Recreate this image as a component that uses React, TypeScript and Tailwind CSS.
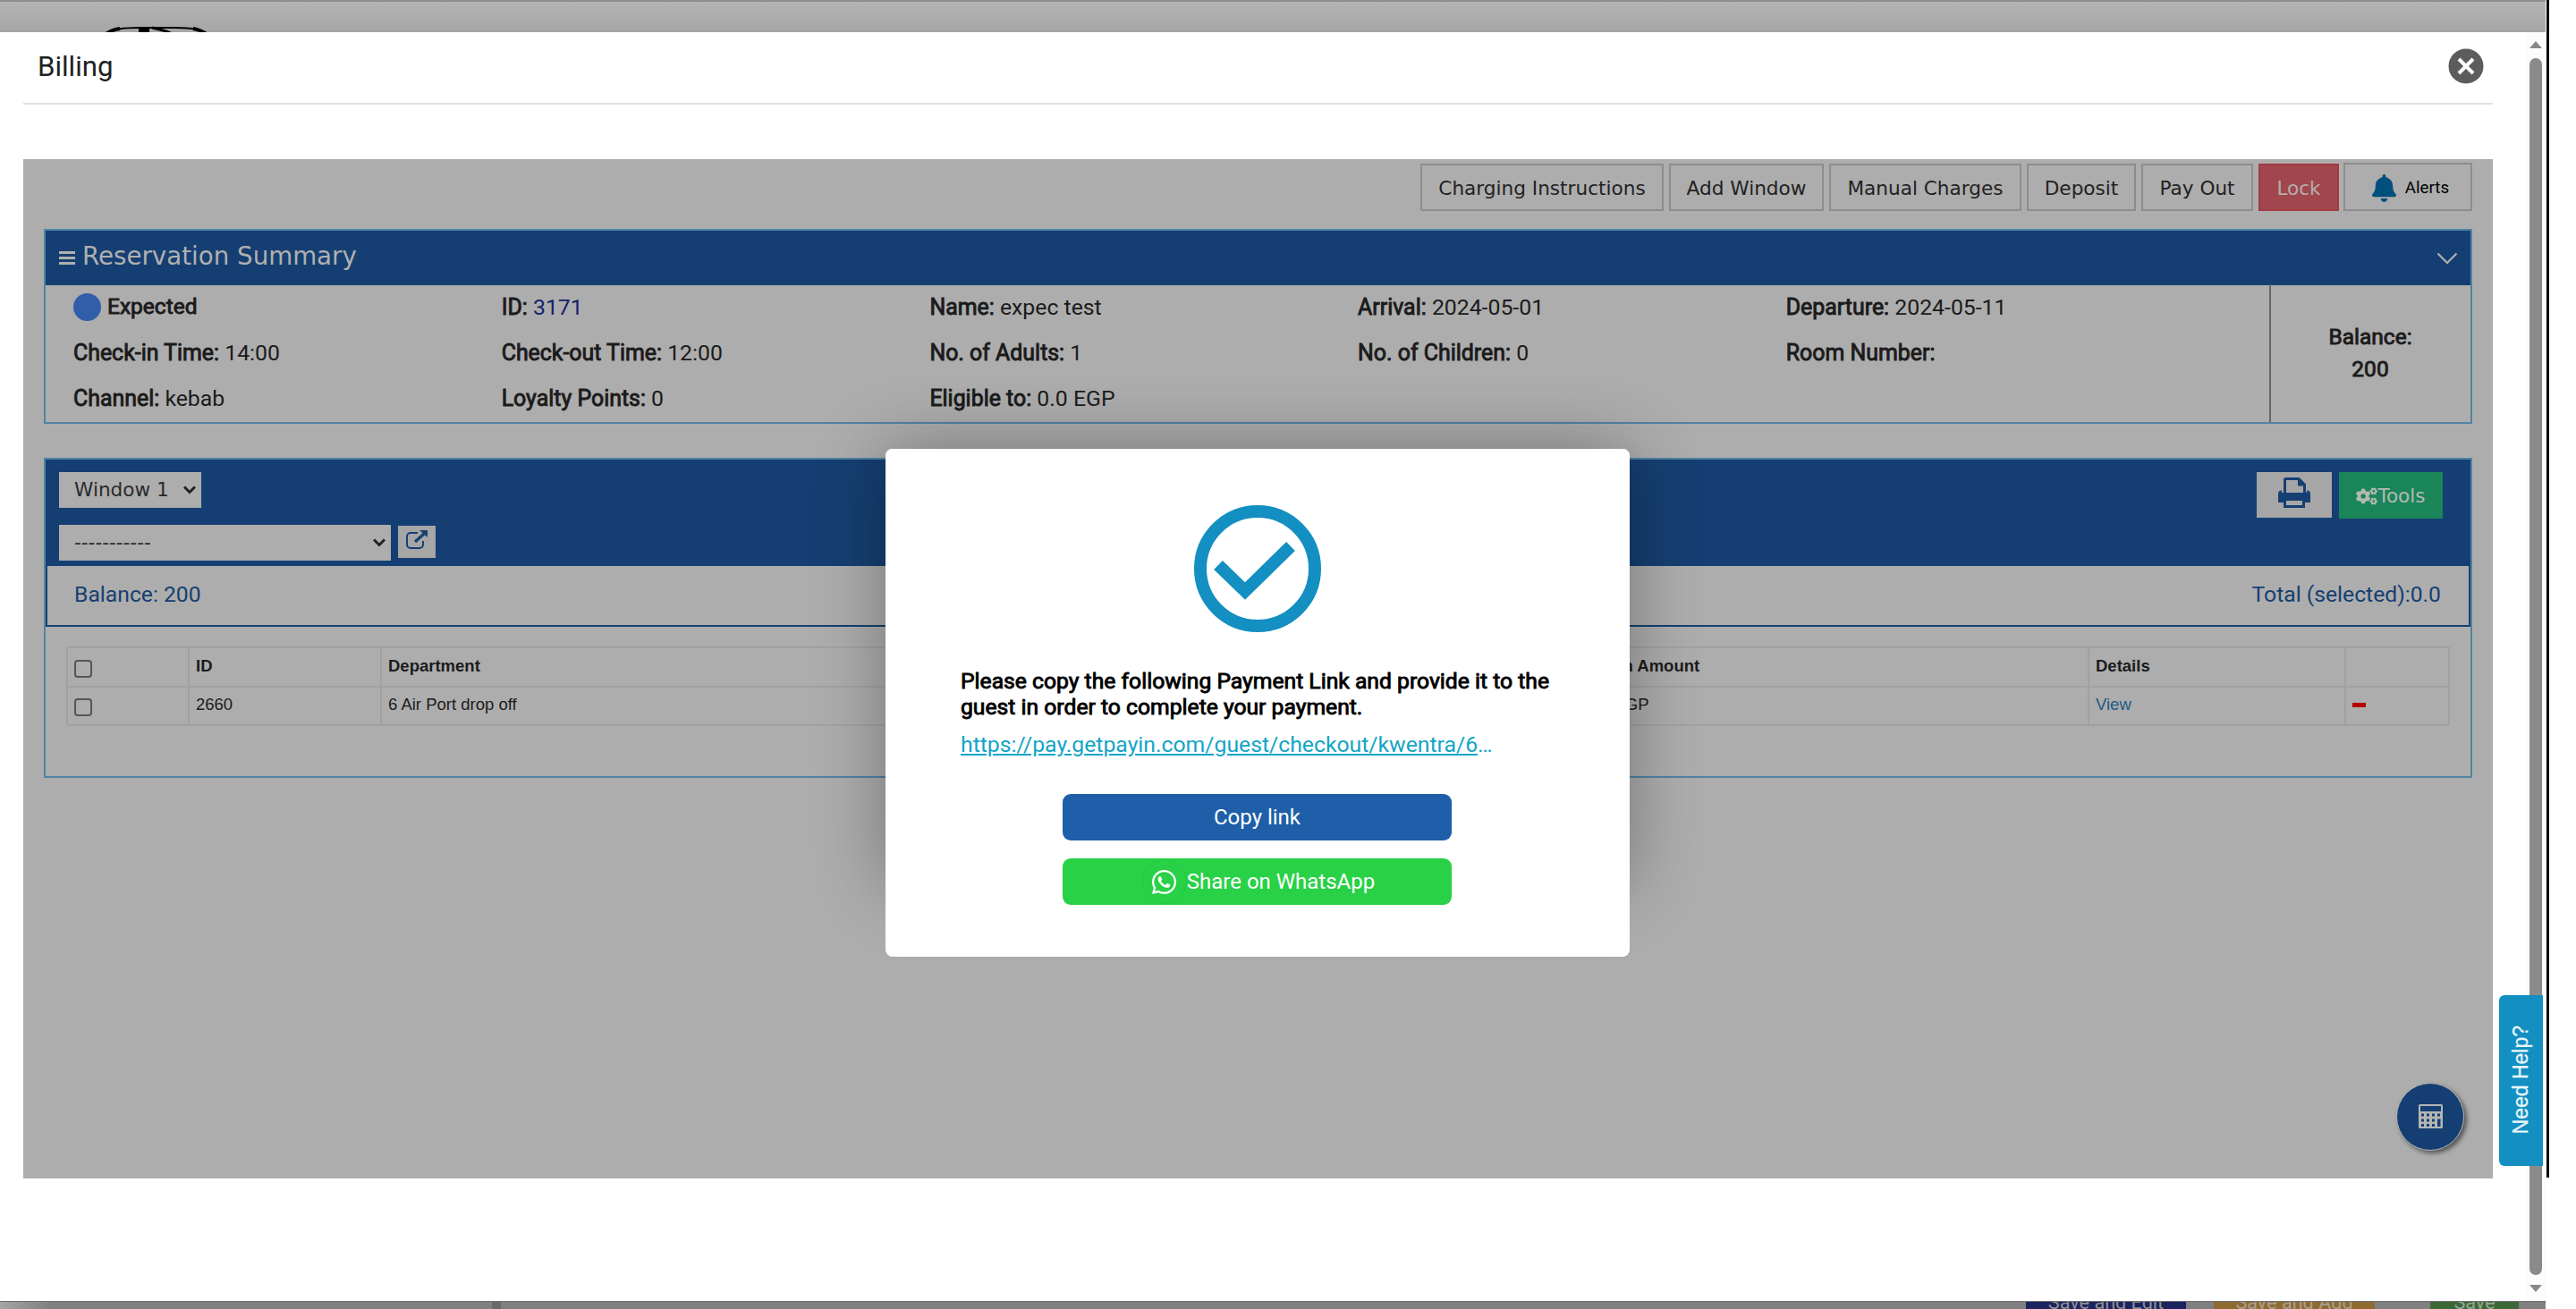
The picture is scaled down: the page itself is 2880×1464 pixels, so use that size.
import type { ReactNode } from 'react';
import { FaBell, FaCogs, FaWhatsapp } from 'react-icons/fa';

interface FieldProps {
  label: string;
  value?: string;
  link?: boolean;
}

const Strong = ({ children }: { children: ReactNode }) => (
  <span className="[-webkit-text-stroke:0.9px_currentColor]">{children}</span>
);

const Field = ({ label, value, link }: FieldProps) => (
  <div className="flex h-[51px] w-[478.7px] items-center whitespace-pre text-[24.8px]">
    <span className="text-[24.9px]"><Strong>{label}</Strong></span>
    {value && <span className={link ? 'text-[#151f6b]' : ''}> {value}</span>}
  </div>
);

const ToolbarButton = ({ label, width }: { label: string; width: string }) => (
  <button className={`h-[53px] border-2 border-[#8d8d8d] pt-[3px] text-[#222] ${width}`}>{label}</button>
);

const Chevron = () => (
  <svg width="14" height="10" viewBox="0 0 14 10" fill="none" stroke="#222" strokeWidth="3">
    <path d="M1 1.5 7 7.5 13 1.5" />
  </svg>
);

const Checkbox = () => <div className="mt-[6px] size-[20px] rounded-[4px] border-2 border-[#555]" />;

const PageTop = () => (
  <div className="h-[36px] overflow-hidden border-t-2 border-[#8f8f8f] bg-linear-to-b from-[#b3b3b3] to-[#a6a6a6]">
    <svg className="ml-[112px] mt-[27px]" width="128" height="20" viewBox="0 0 128 20" fill="none" stroke="#000">
      <path d="M4 11C14 3 26 2 44 2H84C104 2 112 4 122 11" strokeWidth="2" />
      <path d="M4 11C10 6 14 4 22 3M104 3C112 4 116 7 122 11" strokeWidth="4" />
      <path d="M49 2V20" strokeWidth="12" />
      <path d="M58 2Q74 5 82 10" strokeWidth="3" />
    </svg>
  </div>
);

const PageBottom = () => (
  <div className="flex h-[9px] items-start overflow-hidden border-t border-[#6e6e6e] bg-linear-to-r from-[#a5a5a5] via-[#808080] via-2% to-[#808080] text-center text-[21.6px] leading-[22px]">
    <div className="ml-[550px] h-[9px] w-[10px] bg-[#6a6a6a]" />
    <div className="-mt-[10px] ml-[1705px] h-[22px] w-[179px] bg-[#1c2460] text-[#909090]">Save and Edit</div>
    <div className="-mt-[10px] ml-[31px] h-[22px] w-[180px] bg-[#8f6a30] text-[#a8a090]">Save and Add</div>
    <div className="-mt-[10px] ml-[62px] h-[22px] w-[99px] bg-[#3c6837] text-[#98a598]">Save</div>
  </div>
);

const ModalHeader = () => (
  <header className="ml-[26px] flex h-[81px] w-[2761px] items-start justify-between border-b-2 border-[#e0e0e0] pl-[16px] pr-[10px] pt-[18px]">
    <h1 className="text-[31.2px] leading-[42px] text-[#222]">Billing</h1>
    <svg width="40" height="40" viewBox="0 0 40 40">
      <circle cx="20" cy="20" r="19.5" fill="#5c5c5c" />
      <path d="M12 12 28 28M28 12 12 28" stroke="#fff" strokeWidth="4" />
    </svg>
  </header>
);

const Toolbar = () => (
  <div className="flex h-[58px] items-end justify-end gap-[6px] pr-[23px] font-['DejaVu_Sans',sans-serif] text-[21.6px]">
    <ToolbarButton label="Charging Instructions" width="w-[272px]" />
    <ToolbarButton label="Add Window" width="w-[173px]" />
    <ToolbarButton label="Manual Charges" width="w-[215px]" />
    <ToolbarButton label="Deposit" width="w-[122px]" />
    <ToolbarButton label="Pay Out" width="w-[125px]" />
    <button className="h-[53px] w-[90px] border-2 border-[#a23a44] bg-[#a1464d] pt-[3px] text-[#b5adad]">Lock</button>
    <button className="-ml-px flex h-[54px] w-[144px] items-center justify-center gap-[10px] border-2 border-[#8d8d8d] pl-[6px] pt-[2px] font-[Roboto,sans-serif] text-[18.8px] text-black">
      <FaBell className="h-[31px] w-[27px] text-[#004f7d]" />
      Alerts
    </button>
  </div>
);

const ReservationSummary = () => (
  <section className="ml-[23px] mt-[20px] h-[218px] w-[2715px] border-2 border-[#5083a3]">
    <div className="flex h-[61px] items-center justify-between bg-[#153f72] pl-[15px] pr-[14px] text-[#b0b0b0]">
      <div className="-mt-[3px] flex items-center gap-[8px] font-['DejaVu_Sans',sans-serif] text-[27.7px]">
        <svg className="mt-[4px]" width="18" height="16" viewBox="0 0 18 16" fill="currentColor">
          <path d="M0 0h18v3H0zM0 6h18v3H0zM0 12h18v3H0z" />
        </svg>
        Reservation Summary
      </div>
      <svg width="24" height="14" viewBox="0 0 24 14" fill="none" stroke="currentColor" strokeWidth="2.2">
        <path d="M1.5 1.5 12 12 22.5 1.5" />
      </svg>
    </div>
    <div className="flex h-[153px] text-[24.5px] text-[#1b1b1b]">
      <div className="-mt-px flex w-[2486px] flex-wrap content-start pl-[31px]">
        <div className="flex h-[51px] w-[478.7px] items-center gap-[7px]">
          <div className="size-[31px] rounded-full bg-[#325ea9]" />
          <Strong>Expected</Strong>
        </div>
        <Field label="ID:" value="3171" link />
        <Field label="Name:" value="expec test" />
        <Field label="Arrival:" value="2024-05-01" />
        <Field label="Departure:" value="2024-05-11" />
        <Field label="Check-in Time:" value="14:00" />
        <Field label="Check-out Time:" value="12:00" />
        <Field label="No. of Adults:" value="1" />
        <Field label="No. of Children:" value="0" />
        <Field label="Room Number:" />
        <Field label="Channel:" value="kebab" />
        <Field label="Loyalty Points:" value="0" />
        <Field label="Eligible to:" value="0.0 EGP" />
      </div>
      <div className="-mt-px flex grow flex-col items-center justify-center border-l-2 border-[#666] pr-px text-center leading-[36px]">
        <Strong>Balance:</Strong>
        <Strong>200</Strong>
      </div>
    </div>
  </section>
);

const Charges = () => (
  <div className="ml-[23px] mt-[22px] grid w-[2665px] grid-cols-[136px_215px_1319px_590px_287px_116px] border-t-2 border-l-2 border-[#a0a1a6] font-['Liberation_Sans',sans-serif] text-[18.5px] text-[#1b1b1b] [&>div]:flex [&>div]:h-[43.5px] [&>div]:items-center [&>div]:border-r-2 [&>div]:border-b-2 [&>div]:border-[#a0a1a6] [&>div]:pb-[2px] [&>div]:pl-[7px]">
    <div><Checkbox /></div>
    <div className="font-bold">ID</div>
    <div className="font-bold">Department</div>
    <div className="font-bold"><span className="ml-[5px]">Foreign Amount</span></div>
    <div className="font-bold">Details</div>
    <div />
    <div><Checkbox /></div>
    <div>2660</div>
    <div>6 Air Port drop off</div>
    <div>200.0 EGP</div>
    <div className="text-[#235a83]">View</div>
    <div><span className="h-[5px] w-[15px] bg-[#b50000]" /></div>
  </div>
);

const PrintIcon = () => (
  <svg width="36" height="34" viewBox="0 0 36 34" fill="none" stroke="#153f72" strokeWidth="3">
    <path d="M7.500 17V2.500Q7.500 1.500 8.500 1.500H23L29.500 8V17" />
    <path d="M22 1v8.500h8z" fill="#153f72" stroke="none" />
    <path d="M0 28V18.500Q0 14.500 4 14.500V17H32V14.500Q36 14.500 36 18.500V28H30V25H6V28Z" fill="#153f72" stroke="none" />
    <path d="M7.500 24.500H28.500V32.500H7.500Z" fill="#a6a6a6" />
  </svg>
);

const BillingWindow = () => (
  <section className="ml-[23px] mt-[38px] h-[358px] w-[2715px] border-2 border-[#5083a3]">
    <div className="flex h-[119px] items-start justify-between bg-[#153f72] pl-[15px] pr-[31px] pt-[14px] font-['DejaVu_Sans',sans-serif] text-[21.6px] text-[#2a2a2a]">
      <div className="flex flex-col gap-[19px]">
        <div className="flex h-[40px] w-[159px] items-center justify-between bg-[#adadad] pl-[17px] pr-[6px]">
          Window 1 <Chevron />
        </div>
        <div className="flex items-center gap-[8px]">
          <div className="flex h-[40px] w-[371px] items-center justify-between bg-[#adadad] pl-[17px] pr-[6px]">
            ----------- <Chevron />
          </div>
          <div className="-mt-[2px] flex h-[36px] w-[42px] items-start justify-center bg-[#a6a6a6] pt-[5px]">
            <svg width="24" height="22" viewBox="0 0 24 22" fill="none" stroke="#153f72" strokeWidth="2">
              <path d="M13 3H5a4 4 0 0 0-4 4v9a4 4 0 0 0 4 4h10a4 4 0 0 0 4-4v-4" />
              <path d="M10 13 20 4" strokeWidth="3.2" />
              <path d="M15 0h9v8z" fill="#153f72" stroke="none" />
            </svg>
          </div>
        </div>
      </div>
      <div className="flex gap-[8px]">
        <button className="flex h-[51px] w-[84px] items-start justify-center bg-[#a6a6a6] pt-[6px]">
          <PrintIcon />
        </button>
        <button className="flex h-[52px] w-[116px] items-center justify-center bg-[#1a8558] pt-[2px] text-[#b3b9b4]">
          <FaCogs className="size-[24px]" />
          Tools
        </button>
      </div>
    </div>
    <div className="flex h-[68px] items-center justify-between border-2 border-t-0 border-[#153f72] pb-[2px] pl-[30px] pr-[31px] text-[24.7px] text-[#153f72]">
      <span>Balance: 200</span>
      <span>Total (selected):0.0</span>
    </div>
    <Charges />
  </section>
);

const Scrollbar = () => (
  <div className="flex w-[22px] flex-col items-center bg-[#fcfcfc] pt-[10px] pb-[10px]">
    <svg width="14" height="8" viewBox="0 0 14 8" fill="#888">
      <path d="M0 8 7 0 14 8z" />
    </svg>
    <div className="my-[11px] w-[14px] grow rounded-full bg-[#8b8b8b]" />
    <svg width="14" height="8" viewBox="0 0 14 8" fill="#888">
      <path d="M0 0h14L7 8z" />
    </svg>
  </div>
);

const PaymentLinkDialog = () => (
  <div className="absolute left-[990px] top-[502px] h-[489px] w-[832px] rounded-[8px] bg-white shadow-[0_0_80px_rgba(0,0,0,0.33)]">
    <div className="flex h-[568px] w-[832px] flex-col items-center rounded-[8px] bg-white text-[24px]">
      <svg className="mt-[63px]" width="142" height="142" viewBox="0 0 142 142" fill="none" stroke="#138fc2" strokeWidth="14">
        <circle cx="71" cy="71" r="64" />
        <path d="M27 67 57 96 108 46" />
      </svg>
      <div className="mt-[40px] w-[664px] text-[24.7px] leading-[29px] text-black">
        <Strong>
          Please copy the following Payment Link and provide it to the guest in order to complete your payment.
        </Strong>
      </div>
      <div className="mt-[10px] w-[664px] text-[24.75px] leading-[36px] text-[#12a5c6]">
        <span className="underline">https://pay.getpayin.com/guest/checkout/kwentra/6</span>…
      </div>
      <button className="mt-[37px] mr-px h-[52px] w-[435px] rounded-[9px] bg-[#1f5fa9] text-white">Copy link</button>
      <button className="mt-[20px] mr-px flex h-[52px] w-[435px] items-center justify-center rounded-[9px] bg-[#28d146] pl-[3px] text-white">
        <span className="flex size-[50px] items-center justify-center rounded-full border border-[#26ca43]">
          <FaWhatsapp className="size-[31px]" />
        </span>
        Share on WhatsApp
      </button>
    </div>
  </div>
);

const CalculatorButton = () => (
  <button className="absolute left-[2679px] top-[1211px] flex size-[76px] items-center justify-center rounded-full border border-[#b5b5b5] bg-[#153f72] shadow-[3px_3px_5px_rgba(0,0,0,0.5)]">
    <svg className="-mt-[2px]" width="27" height="27" viewBox="0 0 27 27">
      <rect width="27" height="27" rx="1.500" fill="#b5b5b5" />
      <g fill="#153f72">
        <path d="M2 2h23v6H2z" />
        <path d="M3 10.500h3v3H3zM9 10.500h3v3H9zM15 10.500h3v3H15zM21 10.500h3v3H21z" />
        <path d="M3 16.500h3v3H3zM9 16.500h3v3H9zM15 16.500h3v3H15zM21 16.500h3.500v8.500H21z" />
        <path d="M3 22h3v3H3zM9 22h3v3H9zM15 22h3v3H15z" />
      </g>
    </svg>
  </button>
);

const HelpTab = () => (
  <div className="absolute left-[2794px] top-[1113px] flex h-[191px] w-[49px] items-center justify-center rounded-l-[6px] bg-[#138fc2]">
    <span className="rotate-180 pt-[2px] font-['Liberation_Sans',sans-serif] text-[23px] text-[#eaf6fb] [-webkit-text-stroke:0.3px_#eaf6fb] [writing-mode:vertical-rl]">
      Need Help?
    </span>
  </div>
);

export default function App() {
  return (
    <div className="relative flex h-[1464px] w-[2880px] overflow-hidden bg-white font-[Roboto,sans-serif]">
      <div className="w-[2846px]">
        <PageTop />
        <div className="flex h-[1419px] bg-white">
          <div className="w-[2824px]">
            <ModalHeader />
            <main className="ml-[26px] mt-[61px] h-[1140px] w-[2761px] bg-[#adadad]">
              <Toolbar />
              <ReservationSummary />
              <BillingWindow />
            </main>
          </div>
          <Scrollbar />
        </div>
        <PageBottom />
      </div>
      <div className="ml-px h-[1317px] w-[3px] bg-black" />
      <PaymentLinkDialog />
      <CalculatorButton />
      <HelpTab />
    </div>
  );
}
